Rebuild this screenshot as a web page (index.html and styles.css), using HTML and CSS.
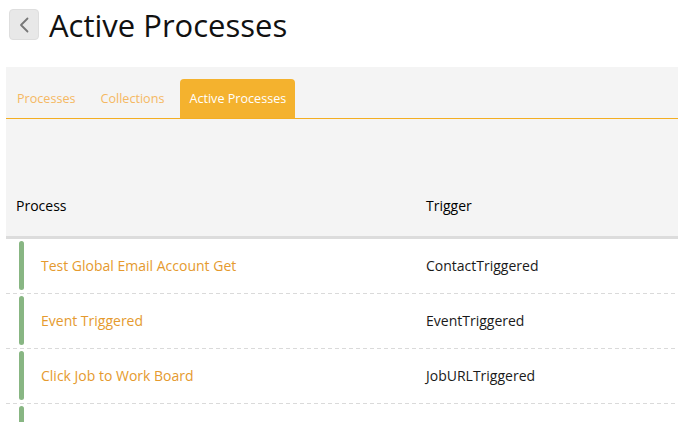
FILE: index.html
```html
<!DOCTYPE html>
<html>
<head>
<meta charset="utf-8">
<link rel="stylesheet" href="styles.css">
</head>
<body>
<header class="page-head">
  <button class="back-btn" aria-label="Back">
    <svg width="10" height="16" viewBox="0 0 10 16"><path d="M8.5 1.5 L2 8 L8.5 14.5" fill="none" stroke="#777" stroke-width="1.8" stroke-linecap="round" stroke-linejoin="round"/></svg>
  </button>
  <h1 class="title">Active Processes</h1>
</header>
<section class="panel">
  <nav class="tabs">
    <a class="tab">Processes</a>
    <a class="tab">Collections</a>
    <a class="tab active">Active Processes</a>
  </nav>
  <div class="spacer"></div>
  <div class="thead">
    <div class="th th-process">Process</div>
    <div class="th">Trigger</div>
  </div>
  <div class="tbody">
    <div class="row">
      <div class="cell cell-process"><span class="bar"></span><span class="pname">Test Global Email Account Get</span></div>
      <div class="cell cell-trigger">ContactTriggered</div>
    </div>
    <div class="row">
      <div class="cell cell-process"><span class="bar"></span><span class="pname">Event Triggered</span></div>
      <div class="cell cell-trigger">EventTriggered</div>
    </div>
    <div class="row">
      <div class="cell cell-process"><span class="bar"></span><span class="pname">Click Job to Work Board</span></div>
      <div class="cell cell-trigger">JobURLTriggered</div>
    </div>
    <div class="row">
      <div class="cell cell-process"><span class="bar"></span><span class="pname"></span></div>
      <div class="cell cell-trigger"></div>
    </div>
  </div>
</section>
</body>
</html>
```
FILE: styles.css
```css
html, body {
  margin: 0;
  padding: 0;
  background: #fff;
  font-family: "Open Sans", "Noto Sans", sans-serif;
  overflow: hidden;
  height: 422px;
}
.page-head {
  display: flex;
  gap: 10px;
  padding: 9px 0 0 9px;
  height: 58px;
  box-sizing: border-box;
  align-items: flex-start;
}
.back-btn {
  width: 30px;
  height: 31px;
  border: 1px solid #dedede;
  border-radius: 4px;
  background: #e8e8e8;
  display: flex;
  align-items: center;
  justify-content: center;
  padding: 0;
  margin: 0;
}
.title {
  margin: 0;
  font-size: 31px;
  font-weight: 400;
  line-height: 32px;
  color: #111;
}
.panel {
  margin-top: 9px;
  margin-left: 6px;
  background: #f4f4f4;
}
.tabs {
  display: flex;
  gap: 7px;
  padding: 12px 0 0 2px;
  border-bottom: 1px solid #f3ae22;
}
.tab {
  height: 39px;
  padding: 0 9px;
  display: flex;
  align-items: center;
  font-size: 12.6px;
  color: #f4b862;
  border-radius: 4px 4px 0 0;
}
.tab.active {
  background: #f4b22e;
  color: #fff;
}
.spacer {
  height: 57px;
}
.thead {
  display: grid;
  grid-template-columns: 410px 1fr;
  height: 60px;
  align-items: center;
  border-bottom: 3px solid #dcdcdc;
  font-size: 14px;
  color: #000;
}
.th {
  padding-left: 10px;
  margin-bottom: 2px;
}
.tbody {
  background: #fff;
}
.row {
  display: grid;
  grid-template-columns: 410px 1fr;
  height: 55px;
  box-sizing: border-box;
  background-image: repeating-linear-gradient(to right, #dadada 0 4px, transparent 4px 7px);
  background-size: 100% 1px;
  background-position: bottom left;
  background-repeat: no-repeat;
  font-size: 14px;
}
.cell {
  display: flex;
  align-items: center;
}
.cell-process {
  padding-left: 13px;
  gap: 17px;
}
.bar {
  align-self: flex-start;
  margin-top: 2px;
  width: 5px;
  height: 49px;
  border-radius: 3px;
  background: #88b683;
}
.pname {
  color: #e59a2e;
  margin-bottom: 3px;
}
.cell-trigger {
  padding-left: 10px;
  color: #1a1a1a;
  margin-bottom: 3px;
}
```
